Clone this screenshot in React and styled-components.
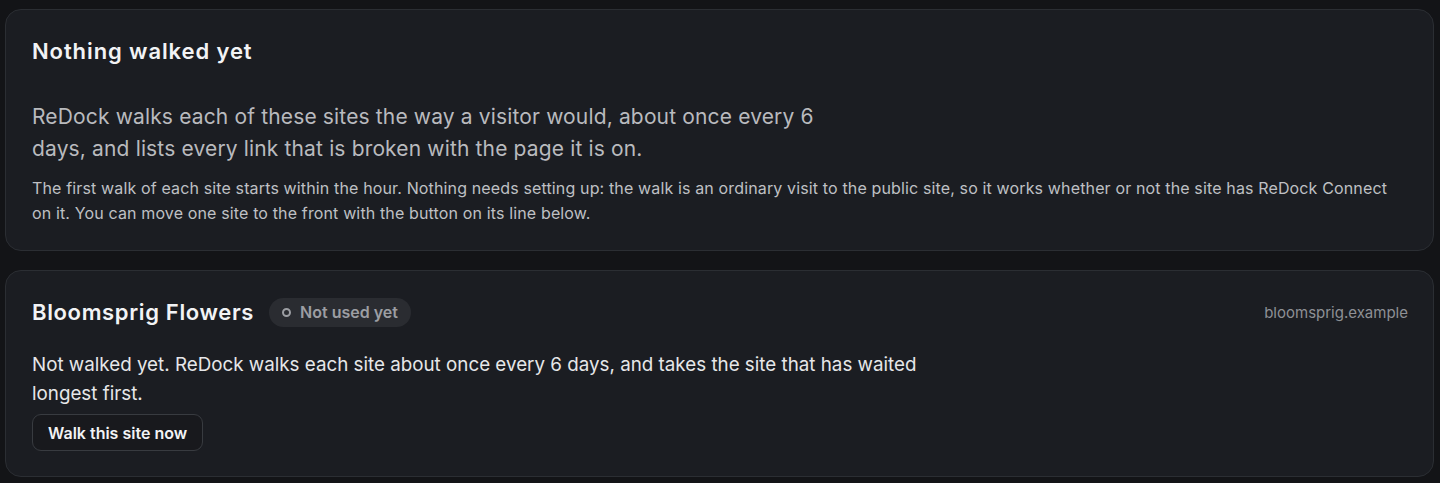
import React from 'react';
import styled, {createGlobalStyle} from 'styled-components';

const GlobalStyle = createGlobalStyle`
    html, body {
        margin: 0;
        background: #131417;
    }
    body {
        font-family: Inter, "Noto Sans", sans-serif;
        color: #e6e7e9;
        -webkit-font-smoothing: antialiased;
    }
`;

const sites = [
    {
        id: 'bloomsprig',
        name: 'Bloomsprig Flowers',
        status: 'Not used yet',
        domain: 'bloomsprig.example',
        note: 'Not walked yet. ReDock walks each site about once every 6 days, and takes the site that has waited longest first.'
    }
];

const App = () => (
    <StyledPage>
        <GlobalStyle/>
        <StyledCard>
            <StyledHeading>Nothing walked yet</StyledHeading>
            <StyledLead>
                ReDock walks each of these sites the way a visitor would, about once every 6 days, and lists every link that is broken with the page it is on.
            </StyledLead>
            <StyledSmall>
                The first walk of each site starts within the hour. Nothing needs setting up: the walk is an ordinary visit to the public site, so it works whether or not the site has ReDock Connect on it. You can move one site to the front with the button on its line below.
            </StyledSmall>
        </StyledCard>
        {sites.map(site => (
            <StyledCard key={site.id} $compact>
                <StyledSiteHeader>
                    <StyledSiteName>{site.name}</StyledSiteName>
                    <StyledBadge>
                        <span className="dot"/>
                        {site.status}
                    </StyledBadge>
                    <StyledDomain>{site.domain}</StyledDomain>
                </StyledSiteHeader>
                <StyledNote>{site.note}</StyledNote>
                <StyledButton type="button">Walk this site now</StyledButton>
            </StyledCard>
        ))}
    </StyledPage>
);

const StyledPage = styled.div`
    display: flex;
    flex-direction: column;
    gap: 19px;
    padding: 9px 6px 6px 5px;
`;

const StyledCard = styled.section`
    display: flex;
    flex-direction: column;
    align-items: flex-start;
    background: #1b1d22;
    border: 1px solid #2b2e33;
    border-radius: 16px;
    padding: ${p => p.$compact ? '26px 25px 25px 26px' : '26px 25px 24px 26px'};
`;

const StyledHeading = styled.h2`
    margin: 0;
    font-family: Inter, sans-serif;
    font-size: 22px;
    font-weight: 600;
    line-height: 30px;
    letter-spacing: 0.9px;
    color: #f2f3f5;
`;

const StyledLead = styled.p`
    margin: 35px 0 0;
    max-width: 805px;
    font-size: 21px;
    line-height: 32px;
    letter-spacing: 0.15px;
    color: #b9babe;
`;

const StyledSmall = styled.p`
    margin: 11px 0 0;
    font-size: 16px;
    line-height: 25px;
    letter-spacing: 0.14px;
    color: #bfc0c4;
`;

const StyledSiteHeader = styled.div`
    display: flex;
    align-items: center;
    width: 100%;
    height: 30px;
`;

const StyledSiteName = styled.h3`
    margin: 0;
    font-family: Inter, sans-serif;
    font-size: 22px;
    font-weight: 600;
    letter-spacing: 0.65px;
    color: #f2f3f5;
`;

const StyledBadge = styled.span`
    display: inline-flex;
    align-items: center;
    gap: 9px;
    height: 29px;
    margin-left: 15px;
    padding: 0 13px 0 13px;
    border-radius: 15px;
    background: #2a2c31;
    font-size: 16px;
    font-weight: 600;
    color: #9c9ea3;

    .dot {
        width: 5px;
        height: 5px;
        border: 2px solid #9c9ea3;
        border-radius: 50%;
    }
`;

const StyledDomain = styled.span`
    margin-left: auto;
    font-size: 15px;
    color: #8e9095;
`;

const StyledNote = styled.p`
    margin: 23px 0 0;
    max-width: 900px;
    font-size: 18.8px;
    line-height: 29px;
    color: #e6e7e9;
`;

const StyledButton = styled.button`
    margin-top: 6px;
    height: 37px;
    padding: 0 15px;
    border: 1px solid #383b40;
    border-radius: 9px;
    background: #18191d;
    font-family: Inter, sans-serif;
    font-size: 16px;
    font-weight: 600;
    color: #f2f3f5;
    cursor: pointer;
`;

export default App;
